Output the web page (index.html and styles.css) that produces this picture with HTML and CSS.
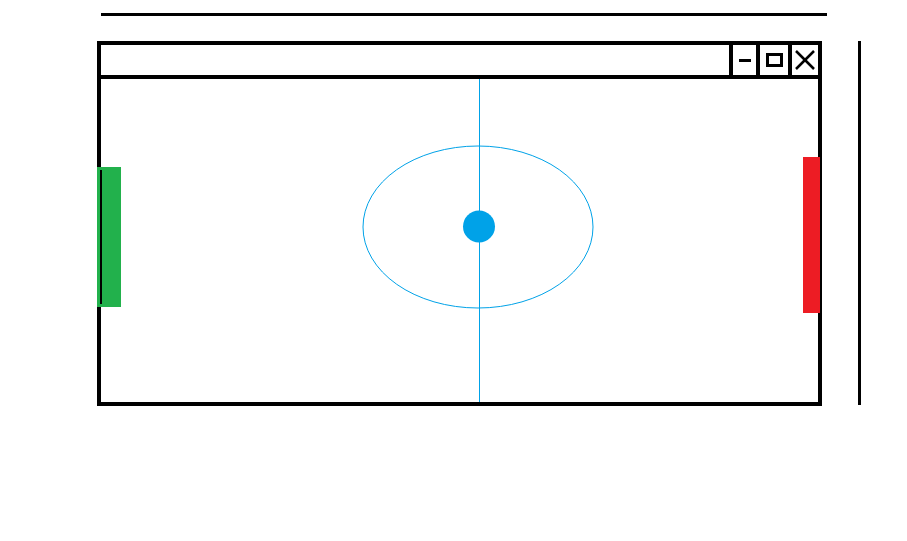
FILE: index.html
```html
<!DOCTYPE html>
<html lang="en">
<head>
  <meta charset="UTF-8">
  <meta name="viewport" content="width=device-width, initial-scale=1.0">
  <title>Pong</title>
  <link rel="stylesheet" href="styles.css">
</head>
<body>
  <div class="page">
    <div class="rule"></div>
    <div class="row">
      <div class="window">
        <div class="titlebar">
          <div class="btn btn-min"><span class="min-glyph"></span></div>
          <div class="btn btn-max"><span class="max-glyph"></span></div>
          <div class="btn btn-close">
            <svg width="20" height="20" viewBox="0 0 20 20">
              <line x1="1" y1="1" x2="19" y2="19" stroke="#000" stroke-width="2.5"/>
              <line x1="19" y1="1" x2="1" y2="19" stroke="#000" stroke-width="2.5"/>
            </svg>
          </div>
        </div>
        <div class="field">
          <svg class="court" width="717" height="323" viewBox="0 0 717 323">
            <line x1="378.5" y1="0" x2="378.5" y2="323" stroke="#00a2e8" stroke-width="1"/>
            <ellipse cx="377" cy="148" rx="115" ry="81" fill="none" stroke="#00a2e8" stroke-width="1"/>
            <circle cx="378" cy="147.5" r="16" fill="#00a2e8"/>
          </svg>
        </div>
        <div class="paddle paddle-left"></div>
        <div class="paddle paddle-right"></div>
      </div>
      <div class="side-line"></div>
    </div>
  </div>
</body>
</html>
```

FILE: styles.css
```css
body { margin: 0; background: #fff; font-family: "Liberation Sans", Arial, sans-serif; }
.page { padding: 13px 0 0 97px; }
.rule { width: 726px; height: 3px; margin-left: 4px; background: #000; }
.row { display: flex; align-items: flex-start; margin-top: 25px; }
.window { position: relative; width: 725px; height: 365px; box-sizing: border-box; border: 4px solid #000; }
.titlebar { display: flex; justify-content: flex-end; height: 30px; border-bottom: 4px solid #000; }
.btn { display: flex; flex-shrink: 0; align-items: center; justify-content: center; border-left: 4px solid #000; }
.btn-min { width: 23px; }
.btn-max { width: 28px; }
.btn-close { width: 26px; }
.min-glyph { flex-shrink: 0; width: 12px; height: 3px; background: #000; }
.max-glyph { flex-shrink: 0; width: 17px; height: 14px; box-sizing: border-box; border: 3px solid #000; }
.btn-close svg { display: block; }
.field { height: 323px; }
.court { display: block; }
.paddle { position: absolute; }
.paddle-left { left: -4px; top: 122px; width: 24px; height: 140px; background: #22b14c; }
.paddle-left::before { content: ""; position: absolute; left: 3px; top: 3px; bottom: 3px; width: 2px; background: #000; }
.paddle-right { right: -2px; top: 112px; width: 17px; height: 156px; background: #ed1c24; }
.side-line { width: 3px; height: 364px; margin-left: 36px; background: #000; }
```
